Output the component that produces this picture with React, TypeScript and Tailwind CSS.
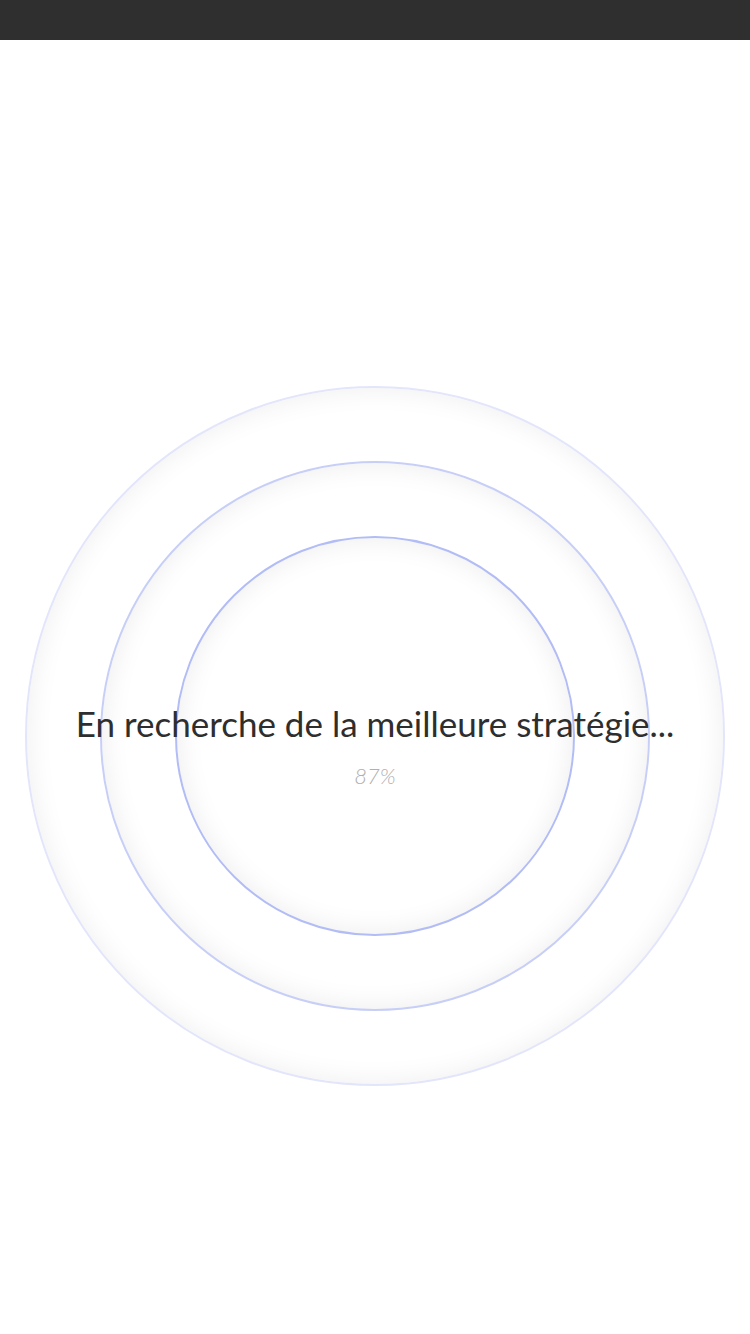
export default function App() {
  return (
    <div className="min-h-[1334px] w-[750px] bg-white font-['Lato','Open_Sans',sans-serif]">
      <div className="h-10 bg-[#2f2f2f]" />
      <div className="flex justify-center pt-[346px]">
        <div className="flex h-[700px] w-[700px] items-center justify-center rounded-full border-2 border-[#e3e6fb] shadow-[inset_0_0_28px_rgba(0,0,0,0.07)]">
          <div className="flex h-[550px] w-[550px] items-center justify-center rounded-full border-2 border-[#c8cff7] shadow-[inset_0_0_28px_rgba(0,0,0,0.08)]">
            <div className="flex h-[400px] w-[400px] items-center justify-center rounded-full border-2 border-[#b2bcf5] shadow-[inset_0_0_28px_rgba(0,0,0,0.08)]">
              <div className="mt-[18px] flex flex-col items-center whitespace-nowrap">
                <div className="text-[35px] leading-[44px] text-[#2e2e2e]">
                  En recherche de la meilleure stratégie...
                </div>
                <div className="mt-[17px] text-[22px] font-light leading-[28px] italic text-[#b0b0b0]">
                  87%
                </div>
              </div>
            </div>
          </div>
        </div>
      </div>
    </div>
  )
}
